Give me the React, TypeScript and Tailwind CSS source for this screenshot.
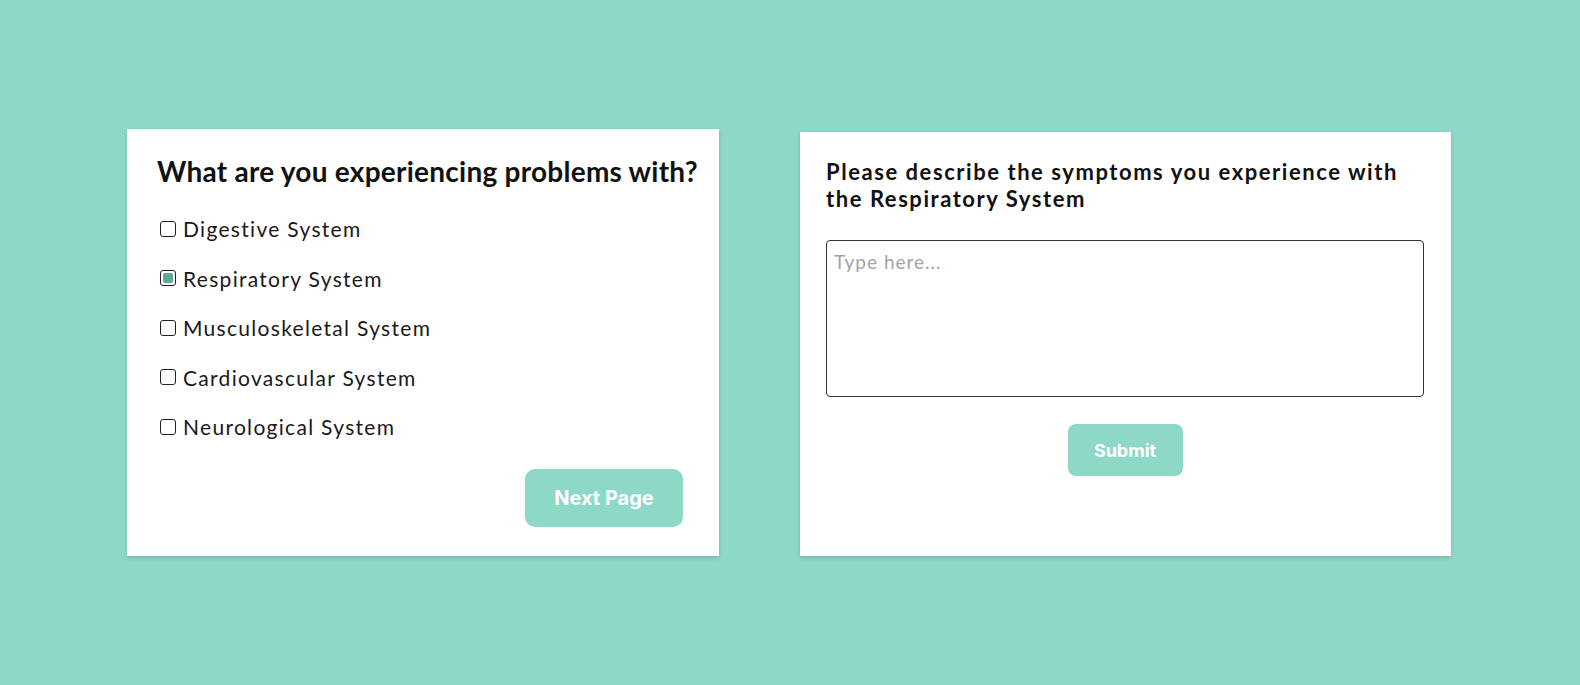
import React from "react";

const items = [
  { label: "Digestive System", checked: false },
  { label: "Respiratory System", checked: true },
  { label: "Musculoskeletal System", checked: false },
  { label: "Cardiovascular System", checked: false },
  { label: "Neurological System", checked: false },
];

function Box({ checked }: { checked: boolean }) {
  return (
    <span className="flex h-[16px] w-[16px] shrink-0 items-center justify-center rounded-[3px] border-[1.5px] border-[#222] bg-white">
      {checked && <span className="h-[10px] w-[10px] rounded-[2px] bg-[#5fa899]" />}
    </span>
  );
}

export default function App() {
  return (
    <div className="flex h-[685px] w-full items-start gap-[81px] overflow-hidden bg-[#8ed8c8] pl-[127px] pt-[129px]">
      <div className="flex h-[427px] w-[592px] shrink-0 flex-col bg-white pl-[30px] pr-[22px] pt-[26px] shadow-[0_2px_4px_rgba(0,0,0,0.15)]">
        <h1 className="whitespace-nowrap font-['Lato',sans-serif] text-[28px] font-bold leading-[32px] tracking-[0.25px] text-[#111]">
          What are you experiencing problems with?
        </h1>
        <div className="mt-[17px] flex flex-col">
          {items.map((it) => (
            <label key={it.label} className="flex h-[49.5px] items-center gap-[7px] pl-[3px]">
              <Box checked={it.checked} />
              <span className="font-['Lato',sans-serif] text-[21px] font-normal leading-none tracking-[1.3px] text-[#1a1a1a]">
                {it.label}
              </span>
            </label>
          ))}
        </div>
        <div className="mt-[17.5px] flex justify-end pr-[14px]">
          <button className="h-[58px] w-[158px] rounded-[10px] bg-[#8ed8c8] font-['Inter',sans-serif] text-[20px] font-bold text-white">
            Next Page
          </button>
        </div>
      </div>
      <div className="mt-[3px] flex h-[424px] w-[651px] shrink-0 flex-col bg-white pl-[26px] pr-[27px] pt-[25.5px] shadow-[0_2px_4px_rgba(0,0,0,0.15)]">
        <h2 className="whitespace-nowrap font-['Lato',sans-serif] text-[22px] font-bold leading-[27px] tracking-[1.55px] text-[#111]">
          Please describe the symptoms you experience with
          <br />
          the Respiratory System
        </h2>
        <textarea
          placeholder="Type here..."
          className="mt-[28.5px] h-[157px] w-[598px] resize-none rounded-[4px] border border-[#333] px-[7px] py-[10px] font-['Lato',sans-serif] text-[19px] leading-[22px] tracking-[1px] text-[#333] outline-none placeholder:text-[#a3a3a3]"
        />
        <div className="mt-[27px] flex justify-center">
          <button className="h-[52px] w-[115px] rounded-[8px] bg-[#8ed8c8] font-['Inter',sans-serif] text-[18px] font-bold text-white">
            Submit
          </button>
        </div>
      </div>
    </div>
  );
}
